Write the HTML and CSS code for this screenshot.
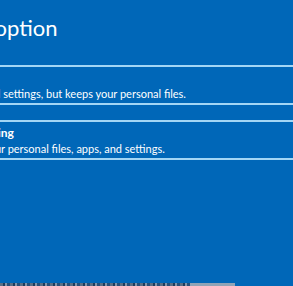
FILE: index.html
```html
<!DOCTYPE html>
<html lang="en">
<head>
  <meta charset="UTF-8">
  <meta name="viewport" content="width=device-width, initial-scale=1.0">
  <title>Choose an option</title>
  <link rel="stylesheet" href="styles.css">
</head>
<body>
  <div class="screen">
    <div class="content">
      <h1 class="heading">Choose an option</h1>
      <div class="choice">
        <div class="choice-title">Keep my files</div>
        <div class="choice-desc">Removes apps and settings, but keeps your personal files.</div>
      </div>
      <div class="choice">
        <div class="choice-title">Remove everything</div>
        <div class="choice-desc">Removes all of your personal files, apps, and settings.</div>
      </div>
    </div>
    <div class="bottom-edge">
      <div class="edge-text"></div>
      <div class="edge-bar"></div>
    </div>
  </div>
</body>
</html>
```

FILE: styles.css
```css
html, body {
  margin: 0;
  padding: 0;
  height: 100%;
  overflow: hidden;
}
body {
  background: #0067b8;
  font-family: Lato, "Open Sans", sans-serif;
  color: #fff;
}
.screen {
  height: 286px;
  display: flex;
  flex-direction: column;
  justify-content: space-between;
}
.content {
  margin-left: -103px;
  width: 480px;
  padding-top: 13px;
}
.heading {
  margin: 0 0 22px -10px;
  font-size: 22px;
  font-weight: 400;
  line-height: 30px;
  white-space: nowrap;
}
.choice {
  border: 2px solid #a3d6f5;
  padding: 3px 12px 1px 12px;
  margin-bottom: 15px;
  white-space: nowrap;
}
.choice-title {
  font-size: 12px;
  font-weight: 700;
  line-height: 16px;
}
.choice-desc {
  font-size: 11px;
  line-height: 16px;
}
.bottom-edge {
  height: 3px;
  display: flex;
}
.edge-text {
  width: 190px;
  background: repeating-linear-gradient(90deg, #5a6f86 0 3px, #1d3b5c 3px 5px, #8093a8 5px 7px, #26507a 7px 10px);
}
.edge-bar {
  width: 45px;
  background: #8fa3b6;
}
```
